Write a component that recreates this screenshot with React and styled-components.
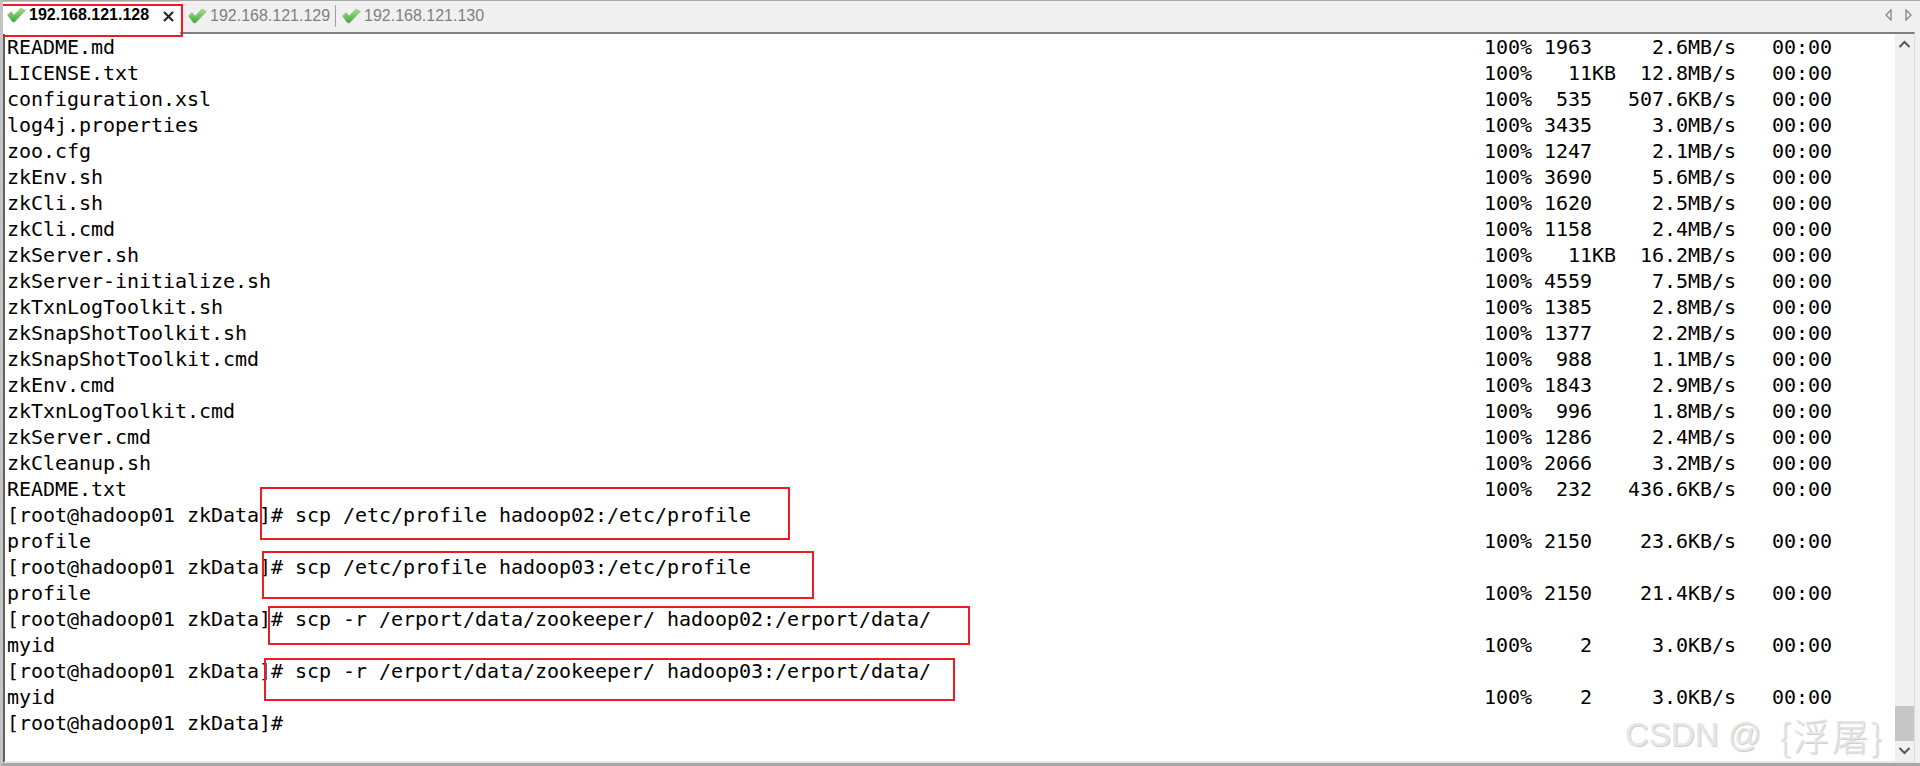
import React from "react";
import styled, { createGlobalStyle } from "styled-components";

const Global = createGlobalStyle`
  html, body { margin: 0; padding: 0; background: #f0f0f0; }
  #root { width: 1920px; height: 766px; overflow: hidden; }
`;

const Window = styled.div`
  position: relative;
  width: 1920px;
  height: 766px;
  overflow: hidden;
  display: flex;
  flex-direction: column;
  box-sizing: border-box;
  background: #f0f0f0;
  border-top: 1px solid #a8a8a8;
  border-left: 3px solid #c4c4c4;
  border-bottom: 3px solid #a8a8a8;
`;

const TabBar = styled.div`
  height: 31px;
  flex: none;
  display: flex;
  align-items: stretch;
  box-sizing: border-box;
  font-family: "Liberation Sans", Arial, sans-serif;
  font-size: 16px;
`;

const Tab = styled.div`
  display: flex;
  align-items: center;
  box-sizing: border-box;
  height: ${(p) => (p.$active ? "33px" : "31px")};
  width: ${(p) => p.$width}px;
  padding-left: ${(p) => p.$pad}px;
  gap: 3px;
  padding-bottom: ${(p) => (p.$active ? 6 : 2)}px;
  color: ${(p) => (p.$active ? "#000" : "#7f7f7f")};
  font-weight: ${(p) => (p.$active ? 700 : 400)};
  background: ${(p) => (p.$active ? "#fff" : "transparent")};
  border-top: ${(p) => (p.$active ? "1px solid #c8c8c8" : "none")};
  position: relative;
  z-index: 1;
`;

const Divider = styled.div`
  width: 1px;
  height: 22px;
  margin: 4px 0 0;
  background: #a0a0a0;
`;

const Spacer = styled.div`
  flex: 1;
`;

const Pager = styled.div`
  display: flex;
  align-items: center;
  gap: 13px;
  padding: 0 8px 4px 0;
`;

const Close = styled.svg`
  width: 11px;
  height: 11px;
  margin-left: 11px;
  margin-top: 3px;
`;

const Terminal = styled.div`
  flex: 1;
  min-height: 0;
  display: flex;
  background: #fff;
  box-sizing: border-box;
  margin-right: 5px;
  border-top: 2px solid #808080;
  border-left: 2px solid #606060;
  border-right: 1px solid #dcdcdc;
  border-bottom: 2px solid #e8e8e8;
`;

const Output = styled.div`
  flex: 1;
  padding: 0 0 0 2px;
  font-family: "DejaVu Sans Mono", "Liberation Mono", monospace;
  font-size: 20px;
  letter-spacing: -0.04px;
  line-height: 26px;
  color: #000;
  white-space: pre;
`;

const Row = styled.div`
  display: grid;
  grid-template-columns: 1477px 1fr;
  height: 26px;
`;

const ScrollTrack = styled.div`
  width: 19px;
  flex: none;
  display: flex;
  flex-direction: column;
  background: #f0f0f0;
`;

const ScrollArrow = styled.svg`
  width: 19px;
  height: 20px;
  flex: none;
`;

const ScrollGap = styled.div`
  flex: 1;
`;

const ScrollThumb = styled.div`
  height: 35px;
  flex: none;
  background: #c6c6c6;
`;

const RedBox = styled.div`
  position: absolute;
  box-sizing: border-box;
  border: 2px solid #ed1c24;
  left: ${(p) => p.$x}px;
  top: ${(p) => p.$y}px;
  width: ${(p) => p.$w}px;
  height: ${(p) => p.$h}px;
  z-index: 3;
`;

const Watermark = styled.div`
  position: absolute;
  left: 1622px;
  top: 711px;
  display: flex;
  align-items: center;
  font-family: "Liberation Sans", "Noto Sans CJK SC", sans-serif;
  font-size: 33px;
  line-height: 46px;
  color: #e6e6e6;
  text-shadow: 1px 1px 1px #c8c8c8;
  white-space: pre;
  z-index: 2;
`;

const WatermarkHan = styled.span`
  font-family: "Noto Sans CJK SC", sans-serif;
  font-size: 37px;
  font-weight: 300;
  letter-spacing: 2px;
  margin-left: 18px;
`;

const CheckIcon = () => (
  <svg width="19" height="16" viewBox="0 0 19 16" style={{ flex: "none" }}>
    <defs>
      <linearGradient id="chk" x1="0" y1="0" x2="0" y2="1">
        <stop offset="0" stopColor="#a6e08a" />
        <stop offset="1" stopColor="#3fa83a" />
      </linearGradient>
    </defs>
    <path d="M0.5 8 L4 4.5 L7 8 L14 1 L18.5 3.5 L7.5 15 L5.5 15 Z" fill="url(#chk)" stroke="#9aae97" strokeWidth="0.6" />
  </svg>
);

const files = [
  ["README.md", "100% 1963     2.6MB/s   00:00"],
  ["LICENSE.txt", "100%   11KB  12.8MB/s   00:00"],
  ["configuration.xsl", "100%  535   507.6KB/s   00:00"],
  ["log4j.properties", "100% 3435     3.0MB/s   00:00"],
  ["zoo.cfg", "100% 1247     2.1MB/s   00:00"],
  ["zkEnv.sh", "100% 3690     5.6MB/s   00:00"],
  ["zkCli.sh", "100% 1620     2.5MB/s   00:00"],
  ["zkCli.cmd", "100% 1158     2.4MB/s   00:00"],
  ["zkServer.sh", "100%   11KB  16.2MB/s   00:00"],
  ["zkServer-initialize.sh", "100% 4559     7.5MB/s   00:00"],
  ["zkTxnLogToolkit.sh", "100% 1385     2.8MB/s   00:00"],
  ["zkSnapShotToolkit.sh", "100% 1377     2.2MB/s   00:00"],
  ["zkSnapShotToolkit.cmd", "100%  988     1.1MB/s   00:00"],
  ["zkEnv.cmd", "100% 1843     2.9MB/s   00:00"],
  ["zkTxnLogToolkit.cmd", "100%  996     1.8MB/s   00:00"],
  ["zkServer.cmd", "100% 1286     2.4MB/s   00:00"],
  ["zkCleanup.sh", "100% 2066     3.2MB/s   00:00"],
  ["README.txt", "100%  232   436.6KB/s   00:00"],
  ["[root@hadoop01 zkData]# scp /etc/profile hadoop02:/etc/profile", ""],
  ["profile", "100% 2150    23.6KB/s   00:00"],
  ["[root@hadoop01 zkData]# scp /etc/profile hadoop03:/etc/profile", ""],
  ["profile", "100% 2150    21.4KB/s   00:00"],
  ["[root@hadoop01 zkData]# scp -r /erport/data/zookeeper/ hadoop02:/erport/data/", ""],
  ["myid", "100%    2     3.0KB/s   00:00"],
  ["[root@hadoop01 zkData]# scp -r /erport/data/zookeeper/ hadoop03:/erport/data/", ""],
  ["myid", "100%    2     3.0KB/s   00:00"],
  ["[root@hadoop01 zkData]#", ""],
];

// offsets are inside the window border (3px left, 1px top)
const boxes = [
  { x: -3, y: 3, w: 183, h: 33 },
  { x: 257, y: 486, w: 530, h: 53 },
  { x: 259, y: 550, w: 552, h: 48 },
  { x: 265, y: 605, w: 702, h: 39 },
  { x: 261, y: 657, w: 691, h: 43 },
];

export default function App() {
  return (
    <Window>
      <Global />
      <TabBar>
        <Tab $active $width={177} $pad={4}>
          <CheckIcon />
          <span>192.168.121.128</span>
          <Close viewBox="0 0 11 11">
            <path d="M1 1 L10 10 M10 1 L1 10" stroke="#222" strokeWidth="2" />
          </Close>
        </Tab>
        <Tab $width={155} $pad={8}>
          <CheckIcon />
          <span>192.168.121.129</span>
        </Tab>
        <Divider />
        <Tab $width={160} $pad={6}>
          <CheckIcon />
          <span>192.168.121.130</span>
        </Tab>
        <Spacer />
        <Pager>
          <svg width="7" height="12" viewBox="0 0 7 12">
            <path d="M6 1 L1 6 L6 11 Z" fill="#f0f0f0" stroke="#8a8a8a" strokeWidth="1.4" />
          </svg>
          <svg width="7" height="12" viewBox="0 0 7 12">
            <path d="M1 1 L6 6 L1 11 Z" fill="#f0f0f0" stroke="#8a8a8a" strokeWidth="1.4" />
          </svg>
        </Pager>
      </TabBar>
      <Terminal>
        <Output>
          {files.map(([name, stat], i) => (
            <Row key={i}>
              <span>{name}</span>
              <span>{stat}</span>
            </Row>
          ))}
        </Output>
        <ScrollTrack>
          <ScrollArrow viewBox="0 0 19 20">
            <path d="M4.5 13 L9.5 8 L14.5 13" fill="none" stroke="#555" strokeWidth="2" />
          </ScrollArrow>
          <ScrollGap />
          <ScrollThumb />
          <ScrollArrow viewBox="0 0 19 20">
            <path d="M4.5 7 L9.5 12 L14.5 7" fill="none" stroke="#555" strokeWidth="2" />
          </ScrollArrow>
        </ScrollTrack>
      </Terminal>
      {boxes.map((b, i) => (
        <RedBox key={i} $x={b.x} $y={b.y} $w={b.w} $h={b.h} />
      ))}
      <Watermark>
        <span>CSDN @</span>
        <WatermarkHan>{"{"}浮屠{"}"}</WatermarkHan>
      </Watermark>
    </Window>
  );
}
